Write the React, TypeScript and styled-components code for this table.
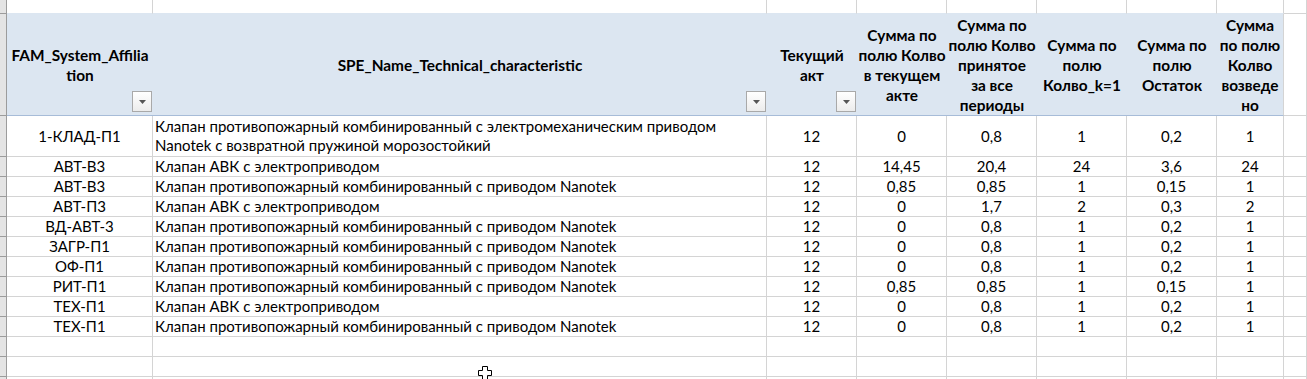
import styled, { createGlobalStyle } from "styled-components";

const GlobalStyle = createGlobalStyle`
  html, body {
    margin: 0;
    padding: 0;
    background: #fff;
    overflow: hidden;
  }
  body {
    font-family: Lato, "Liberation Sans", Arial, sans-serif;
    color: #000;
  }
`;

interface HeaderCol {
  lines: string[];
  filter: boolean;
}

interface DataRow {
  system: string;
  name: string[];
  act: string;
  current: string;
  accepted: string;
  k1: string;
  rest: string;
  built: string;
}

const headers: HeaderCol[] = [
  { lines: ["FAM_System_Affilia", "tion"], filter: true },
  { lines: ["SPE_Name_Technical_characteristic"], filter: true },
  { lines: ["Текущий", "акт"], filter: true },
  { lines: ["Сумма по", "полю Колво", "в текущем", "акте"], filter: false },
  { lines: ["Сумма по", "полю Колво", "принятое", "за все", "периоды"], filter: false },
  { lines: ["Сумма по", "полю", "Колво_k=1"], filter: false },
  { lines: ["Сумма по", "полю", "Остаток"], filter: false },
  { lines: ["Сумма", "по полю", "Колво", "возведе", "но"], filter: false },
];

const FIRE = "Клапан противопожарный комбинированный с приводом Nanotek";
const AVK = "Клапан АВК с электроприводом";

const rows: DataRow[] = [
  {
    system: "1-КЛАД-П1",
    name: [
      "Клапан противопожарный комбинированный с электромеханическим приводом",
      "Nanotek с возвратной пружиной морозостойкий",
    ],
    act: "12", current: "0", accepted: "0,8", k1: "1", rest: "0,2", built: "1",
  },
  { system: "АВТ-В3", name: [AVK], act: "12", current: "14,45", accepted: "20,4", k1: "24", rest: "3,6", built: "24" },
  { system: "АВТ-В3", name: [FIRE], act: "12", current: "0,85", accepted: "0,85", k1: "1", rest: "0,15", built: "1" },
  { system: "АВТ-П3", name: [AVK], act: "12", current: "0", accepted: "1,7", k1: "2", rest: "0,3", built: "2" },
  { system: "ВД-АВТ-3", name: [FIRE], act: "12", current: "0", accepted: "0,8", k1: "1", rest: "0,2", built: "1" },
  { system: "ЗАГР-П1", name: [FIRE], act: "12", current: "0", accepted: "0,8", k1: "1", rest: "0,2", built: "1" },
  { system: "ОФ-П1", name: [FIRE], act: "12", current: "0", accepted: "0,8", k1: "1", rest: "0,2", built: "1" },
  { system: "РИТ-П1", name: [FIRE], act: "12", current: "0,85", accepted: "0,85", k1: "1", rest: "0,15", built: "1" },
  { system: "ТЕХ-П1", name: [AVK], act: "12", current: "0", accepted: "0,8", k1: "1", rest: "0,2", built: "1" },
  { system: "ТЕХ-П1", name: [FIRE], act: "12", current: "0", accepted: "0,8", k1: "1", rest: "0,2", built: "1" },
];

const EMPTY_ROWS = 3;
const COLS = 10;

export default function App() {
  return (
    <>
      <GlobalStyle />
      <Sheet>
        {Array.from({ length: COLS }, (_, i) =>
          i === 0 ? <RowMark key={i} /> : <TopCell key={i} $covered={i < COLS - 1} />
        )}

        <RowMark />
        {headers.map((h, i) => (
          <HeadCell key={i} $last={i === headers.length - 1}>
            {h.lines.map((l, j) => (
              <HeadLine key={j}>{l}</HeadLine>
            ))}
            {h.filter && (
              <FilterButton>
                <svg width="7" height="4" viewBox="0 0 7 4">
                  <path d="M0 0h7L3.5 4z" fill="#555" />
                </svg>
              </FilterButton>
            )}
          </HeadCell>
        ))}
        <Cell />

        {rows.map((r, i) => (
          <Row key={i}>
            <RowMark />
            <Cell>{r.system}</Cell>
            <Cell $align="left">
              <div>
                {r.name.map((n, j) => (
                  <div key={j}>{n}</div>
                ))}
              </div>
            </Cell>
            <Cell>{r.act}</Cell>
            <Cell>{r.current}</Cell>
            <Cell>{r.accepted}</Cell>
            <Cell>{r.k1}</Cell>
            <Cell>{r.rest}</Cell>
            <Cell>{r.built}</Cell>
            <Cell />
          </Row>
        ))}

        {Array.from({ length: EMPTY_ROWS }, (_, i) => (
          <Row key={`e${i}`}>
            <RowMark />
            {Array.from({ length: COLS - 1 }, (_, j) => (
              <Cell key={j} />
            ))}
          </Row>
        ))}
      </Sheet>
      <Cursor>
        <svg width="16" height="16" viewBox="0 0 16 16">
          <path
            d="M5.5 1.5h5v4h4v5h-4v4h-5v-4h-4v-5h4z"
            fill="#fff"
            stroke="#000"
            strokeWidth="1"
          />
        </svg>
      </Cursor>
    </>
  );
}

const Sheet = styled.div`
  display: grid;
  grid-template-columns: 7px 146px 614px repeat(5, 90px) 67px 1fr;
  grid-template-rows: 14px 102px 41px repeat(12, 20px);
  width: 1307px;
  font-size: 15px;
  line-height: 19px;
`;

const Row = styled.div`
  display: contents;
`;

const RowMark = styled.div`
  box-sizing: border-box;
  background: #e4e4e4;
  border-right: 1px solid #9c9c9c;
  border-bottom: 1px solid #9c9c9c;
`;

const TopCell = styled.div<{ $covered: boolean }>`
  box-sizing: border-box;
  border-right: 1px solid #d4d4d4;
  border-bottom: 1px solid ${(p) => (p.$covered ? "#dce6f1" : "#d4d4d4")};
`;

const HeadCell = styled.div<{ $last: boolean }>`
  box-sizing: border-box;
  position: relative;
  display: flex;
  flex-direction: column;
  justify-content: center;
  align-items: center;
  background: #dce6f1;
  border-bottom: 1px solid #a7bcd8;
  border-right: ${(p) => (p.$last ? "1px solid #d4d4d4" : "none")};
  font-size: 15.4px;
  font-weight: bold;
  line-height: 20px;
  text-align: center;
  white-space: nowrap;
`;

const HeadLine = styled.span`
  display: block;
`;

const FilterButton = styled.div`
  position: absolute;
  right: 1px;
  bottom: 3px;
  box-sizing: border-box;
  width: 20px;
  height: 21px;
  display: flex;
  align-items: center;
  justify-content: center;
  border: 1px solid #a9a9a9;
  background: linear-gradient(#ffffff, #ececec);
`;

const Cell = styled.div<{ $align?: "left" | "center" }>`
  box-sizing: border-box;
  display: flex;
  align-items: center;
  justify-content: ${(p) => (p.$align === "left" ? "flex-start" : "center")};
  padding: 0 2px;
  border-right: 1px solid #d4d4d4;
  border-bottom: 1px solid #d4d4d4;
  white-space: nowrap;
  overflow: hidden;
`;

const Cursor = styled.div`
  position: absolute;
  left: 477px;
  top: 365px;
  line-height: 0;
`;
